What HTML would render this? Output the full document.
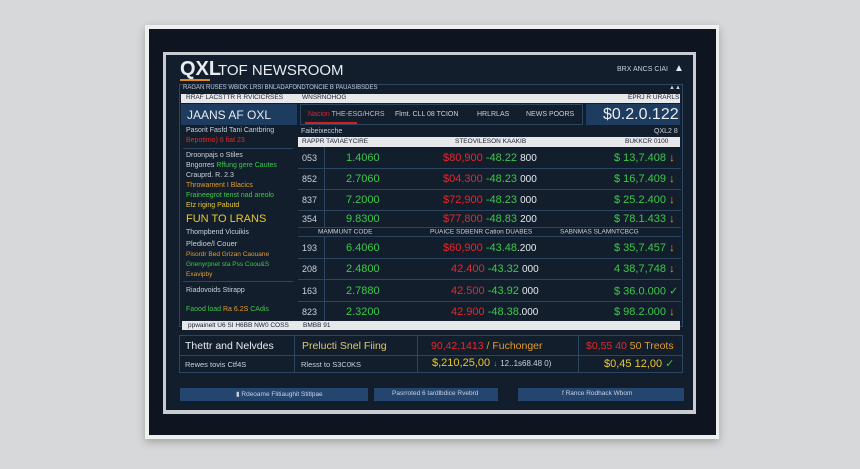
<!DOCTYPE html><html><head><style>
*{margin:0;padding:0;box-sizing:border-box}
body{width:860px;height:469px;background:#d6d8d9;font-family:"Liberation Sans",sans-serif;position:relative;overflow:hidden}
.a{position:absolute;white-space:nowrap}
.s{font-size:7px;color:#c8d0dc}
.g{color:#3cc84a}.r{color:#e8262a}.o{color:#e39a2a}.y{color:#e8c830}.w{color:#e8ecf0}
.row{position:absolute;left:298px;width:383px;border-bottom:1px solid #2c4662;font-size:11px}
.row span{position:absolute;top:50%;transform:translateY(-50%)}
</style></head><body>
<div class="a" style="left:145px;top:25px;width:574px;height:414px;background:#eef0f0;box-shadow:0 3px 8px rgba(0,0,0,.25)"></div>
<div class="a" style="left:149px;top:29px;width:567px;height:406px;background:#0e1520"></div>
<div class="a" style="left:163px;top:52px;width:533px;height:362px;background:#c9ccd0"></div>
<div class="a" style="left:166px;top:55px;width:527px;height:355px;background:#131e2c"></div>

<div class="a w" style="left:180px;top:58px;font-size:20px;font-weight:bold">QXL</div>
<div class="a w" style="left:218px;top:62px;font-size:15px">TOF NEWSROOM</div>
<div class="a" style="left:180px;top:79px;width:30px;height:2px;background:#e08a20"></div>
<div class="a s" style="left:617px;top:66px">BRX ANCS CIAI</div>
<div class="a w" style="left:674px;top:63px;font-size:10px">▲</div>

<div class="a" style="left:179px;top:84px;width:504px;height:243px;border:1px solid #2c4662"></div>
<div class="a s" style="left:183px;top:85px;font-size:6px">RAGAN RUSES WBIDK LRSI BNLADAFONDTONCIE B PAUASIBSDES</div>
<div class="a s" style="left:669px;top:85px;font-size:6px">▲▲</div>
<div class="a" style="left:181px;top:94px;width:499px;height:9px;background:#e6e8ea"></div>
<div class="a" style="left:186px;top:94px;font-size:6.5px;color:#223">RRAF LACSTTR R RVICICRSES</div>
<div class="a" style="left:302px;top:94px;font-size:6.5px;color:#223">WNSRNOHOG</div>
<div class="a" style="left:628px;top:94px;font-size:6.5px;color:#223">EPRJ R URARLS</div>

<div class="a" style="left:181px;top:104px;width:116px;height:21px;background:#1e3c60"></div>
<div class="a w" style="left:187px;top:108px;font-size:12px">JAANS AF OXL</div>
<div class="a" style="left:300px;top:104px;width:283px;height:21px;border:1px solid #2c4662"></div>
<div class="a s" style="left:308px;top:111px;color:#d23">Nacion <span style="color:#bbc">THE-ESG/HCRS</span></div>
<div class="a" style="left:305px;top:122px;width:52px;height:2px;background:#c22"></div>
<div class="a s" style="left:395px;top:111px">Flmt. CLL 08 TCION</div>
<div class="a s" style="left:477px;top:111px">HRLRLAS</div>
<div class="a s" style="left:526px;top:111px">NEWS POORS</div>
<div class="a" style="left:586px;top:104px;width:94px;height:21px;background:#1e3c60"></div>
<div class="a w" style="left:603px;top:106px;font-size:16px">$0.2.0.122</div>

<div class="a s" style="left:186px;top:127px">Pasorit Fasfd Tani Cantbring</div>
<div class="a s r" style="left:186px;top:137px">Bepotimo) 6 fiat 23</div>
<div class="a" style="left:183px;top:148px;width:110px;height:1px;background:#2c4662"></div>
<div class="a s" style="left:186px;top:152px">Droonpajs o Stiles</div>
<div class="a s" style="left:186px;top:162px">Bngorres <span class="g">Rffung gere Cautes</span></div>
<div class="a s" style="left:186px;top:172px">Crauprd. R. 2.3</div>
<div class="a s o" style="left:186px;top:182px">Throwament I Blacics</div>
<div class="a s g" style="left:186px;top:192px">Fraineegrot tenst nad areolo</div>
<div class="a s y" style="left:186px;top:202px">Etz riging Pabutd</div>
<div class="a y" style="left:186px;top:213px;font-size:11px">FUN TO LRANS</div>
<div class="a s" style="left:186px;top:229px">Thompbend Vicuikis</div>
<div class="a s" style="left:186px;top:239px;font-size:7.5px">Pledioe/l Couer</div>
<div class="a s o" style="left:186px;top:251px;font-size:6.5px">Pisordr Bed Grizan Caouane</div>
<div class="a s g" style="left:186px;top:261px;font-size:6.5px">Gnenyrpnet sta Pss Coou&S</div>
<div class="a s o" style="left:186px;top:271px;font-size:6.5px">Exavipby</div>
<div class="a" style="left:183px;top:281px;width:110px;height:1px;background:#2c4662"></div>
<div class="a s" style="left:186px;top:287px">Riadovoids Stirapp</div>
<div class="a s g" style="left:186px;top:306px">Faood load <span class="o">Ra 6.2S</span> CAdis</div>

<div class="a s" style="left:301px;top:128px">Faibeixecche</div>
<div class="a s" style="left:654px;top:128px">QXL2 8</div>
<div class="a" style="left:298px;top:137px;width:382px;height:10px;background:#e6e8ea"></div>
<div class="a" style="left:302px;top:138px;font-size:6.5px;color:#223">RAPPR TAVIAEYCIRE</div>
<div class="a" style="left:455px;top:138px;font-size:6.5px;color:#223">STEOVILESON KAAKIB</div>
<div class="a" style="left:625px;top:138px;font-size:6.5px;color:#223">BUKKCR 0100</div>
<div class="a" style="left:324px;top:147px;width:1px;height:81px;background:#2c4662"></div>
<div class="a" style="left:324px;top:237px;width:1px;height:84px;background:#2c4662"></div>

<div class="row" style="top:147px;height:22px"><span class="s" style="left:4px;font-size:9px">053</span><span class="g" style="left:48px">1.4060</span><span class="r" style="left:145px">$80,900 <span class="g" style="position:static;transform:none">-48.22</span> <span class="w" style="position:static;transform:none;font-size:10px">800</span></span><span class="g" style="left:316px">$ 13,7.408 <span class="o" style="position:static;transform:none">↓</span></span></div>
<div class="row" style="top:169px;height:21px"><span class="s" style="left:4px;font-size:9px">852</span><span class="g" style="left:48px">2.7060</span><span class="r" style="left:145px">$04.300 <span class="g" style="position:static;transform:none">-48.23</span> <span class="w" style="position:static;transform:none;font-size:10px">000</span></span><span class="g" style="left:316px">$ 16,7.409 <span class="o" style="position:static;transform:none">↓</span></span></div>
<div class="row" style="top:190px;height:21px"><span class="s" style="left:4px;font-size:9px">837</span><span class="g" style="left:48px">7.2000</span><span class="r" style="left:145px">$72,900 <span class="g" style="position:static;transform:none">-48.23</span> <span class="w" style="position:static;transform:none;font-size:10px">000</span></span><span class="g" style="left:316px">$ 25.2.400 <span class="o" style="position:static;transform:none">↓</span></span></div>
<div class="row" style="top:211px;height:17px"><span class="s" style="left:4px;font-size:9px">354</span><span class="g" style="left:48px">9.8300</span><span class="r" style="left:145px">$77,800 <span class="g" style="position:static;transform:none">-48.83</span> <span class="w" style="position:static;transform:none;font-size:10px">200</span></span><span class="g" style="left:316px">$ 78.1.433 <span class="o" style="position:static;transform:none">↓</span></span></div>
<div class="row" style="top:228px;height:9px;font-size:6.5px;color:#c8d0dc"><span style="left:20px">MAMMUNT CODE</span><span style="left:132px">PUAICE SDBENR Cation DUABES</span><span style="left:262px">SABNMAS SLAMNTCBCG</span></div>
<div class="row" style="top:237px;height:22px"><span class="s" style="left:4px;font-size:9px">193</span><span class="g" style="left:48px">6.4060</span><span class="r" style="left:145px">$60,900 <span class="g" style="position:static;transform:none">-43.48</span><span class="w" style="position:static;transform:none;font-size:10px">.200</span></span><span class="g" style="left:316px">$ 35,7.457 <span class="o" style="position:static;transform:none">↓</span></span></div>
<div class="row" style="top:259px;height:21px"><span class="s" style="left:4px;font-size:9px">208</span><span class="g" style="left:48px">2.4800</span><span class="r" style="left:153px">42.400 <span class="g" style="position:static;transform:none">-43.32</span> <span class="w" style="position:static;transform:none;font-size:10px">000</span></span><span class="g" style="left:316px">4 38,7,748 <span class="o" style="position:static;transform:none">↓</span></span></div>
<div class="row" style="top:280px;height:22px"><span class="s" style="left:4px;font-size:9px">163</span><span class="g" style="left:48px">2.7880</span><span class="r" style="left:153px">42.500 <span class="g" style="position:static;transform:none">-43.92</span> <span class="w" style="position:static;transform:none;font-size:10px">000</span></span><span class="g" style="left:316px">$ 36.0.000 <span style="position:static;transform:none">✓</span></span></div>
<div class="row" style="top:302px;height:19px;border:none"><span class="s" style="left:4px;font-size:9px">823</span><span class="g" style="left:48px">2.3200</span><span class="r" style="left:153px">42.900 <span class="g" style="position:static;transform:none">-48.38</span><span class="w" style="position:static;transform:none;font-size:10px">.000</span></span><span class="g" style="left:316px">$ 98.2.000 <span class="o" style="position:static;transform:none">↓</span></span></div>

<div class="a" style="left:182px;top:321px;width:498px;height:9px;background:#e6e8ea"></div>
<div class="a" style="left:188px;top:322px;font-size:6.5px;color:#223">ppwainelt U6 SI H6BB NW0 COSS</div>
<div class="a" style="left:303px;top:322px;font-size:6.5px;color:#223">BMBB 91</div>

<div class="a" style="left:179px;top:335px;width:504px;height:38px;border:1px solid #2c4662"></div>
<div class="a" style="left:180px;top:355px;width:502px;height:1px;background:#2c4662"></div>
<div class="a" style="left:294px;top:335px;width:1px;height:38px;background:#2c4662"></div>
<div class="a" style="left:417px;top:335px;width:1px;height:38px;background:#2c4662"></div>
<div class="a" style="left:578px;top:335px;width:1px;height:38px;background:#2c4662"></div>
<div class="a w" style="left:185px;top:340px;font-size:10.5px">Thettr and Nelvdes</div>
<div class="a s" style="left:185px;top:360px;font-size:7.5px">Rewes tovis Ctf4S</div>
<div class="a y" style="left:302px;top:340px;font-size:10.5px;color:#dcc870">Prelucti Snel Fiing</div>
<div class="a s" style="left:301px;top:360px;font-size:7.5px">Rlesst to S3C0KS</div>
<div class="a o" style="left:431px;top:340px;font-size:10.5px"><span class="r">90,42,1413</span> / Fuchonger</div>
<div class="a y" style="left:432px;top:357px;font-size:11px">$,210,25,00 <span class="g" style="font-size:8px">↓</span> <span class="s" style="font-size:8px">12..1s68.48 0)</span></div>
<div class="a r" style="left:586px;top:340px;font-size:10.5px">$0,55 40 <span class="o">50 Treots</span></div>
<div class="a y" style="left:604px;top:357px;font-size:11px">$0,45 12,00 <span class="g">✓</span></div>

<div class="a" style="left:180px;top:388px;width:188px;height:13px;background:#24466e"></div>
<div class="a s" style="left:236px;top:390px;font-size:6.5px">▮ Rdeoame Flitiaughit Stitlpae</div>
<div class="a" style="left:374px;top:388px;width:124px;height:13px;background:#24466e"></div>
<div class="a s" style="left:392px;top:390px;font-size:6.5px">Pasrroted 6 tardlbdice Rvebrd</div>
<div class="a" style="left:518px;top:388px;width:166px;height:13px;background:#24466e"></div>
<div class="a s" style="left:562px;top:390px;font-size:6.5px">f Rance Rodhack Wbom</div>
</body></html>
